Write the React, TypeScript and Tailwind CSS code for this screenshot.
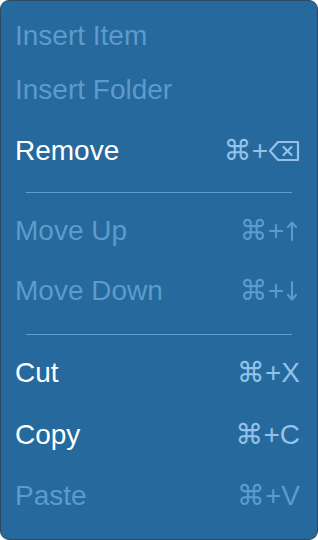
import React from 'react';

type Item = {
  label: string;
  keyName?: React.ReactNode;
  enabled: boolean;
  h: string;
};

const DeleteKey = () => (
  <svg width="32" height="22" viewBox="0 0 32 22" fill="none" stroke="currentColor" strokeWidth="2.2" strokeLinejoin="round" strokeLinecap="round">
    <path d="M2 11 L10 2 H30 V20 H10 Z" />
    <path d="M15.5 7 L23.5 15 M23.5 7 L15.5 15" />
  </svg>
);

const UpArrow = () => (
  <svg width="16" height="22" viewBox="0 0 16 22" fill="none" stroke="currentColor" strokeWidth="2" strokeLinecap="round" strokeLinejoin="round">
    <path d="M8 3 V20 M4 7 L8 2.5 L12 7" />
  </svg>
);

const DownArrow = () => (
  <svg width="16" height="22" viewBox="0 0 16 22" fill="none" stroke="currentColor" strokeWidth="2" strokeLinecap="round" strokeLinejoin="round">
    <path d="M8 2 V19 M4 15 L8 19.5 L12 15" />
  </svg>
);

const Row: React.FC<{ item: Item }> = ({ item }) => (
  <div className={`flex items-center justify-between pl-[14px] pr-[17px] ${item.h}`}>
    <span className={item.enabled ? 'text-white' : 'text-[#5c9bcc]'}>{item.label}</span>
    {item.keyName && (
      <span className={`flex items-center ${item.enabled ? 'text-[#92c2e8]' : 'text-[#5c9bcc]'}`}>
        ⌘+{item.keyName}
      </span>
    )}
  </div>
);

const Separator: React.FC<{ className: string }> = ({ className }) => (
  <div className={className}>
    <div className="mx-[25px] h-px bg-[#5f9ecf]" />
  </div>
);

export default function App() {
  return (
    <div className="w-[318px] h-[540px] bg-white">
      <div
        className="w-full h-full flex flex-col pt-2 bg-[#25699d] border border-[#2a4a66] rounded-[9px] text-[28px] leading-none"
        style={{ fontFamily: '"Liberation Sans", "DejaVu Sans", sans-serif' }}
      >
        <Row item={{ label: 'Insert Item', enabled: false, h: 'h-[54px]' }} />
        <Row item={{ label: 'Insert Folder', enabled: false, h: 'h-[54px]' }} />
        <Row item={{ label: 'Remove', keyName: <DeleteKey />, enabled: true, h: 'h-[68px]' }} />
        <Separator className="pt-[7px] pb-[6px]" />
        <Row item={{ label: 'Move Up', keyName: <UpArrow />, enabled: false, h: 'h-[64px]' }} />
        <Row item={{ label: 'Move Down', keyName: <DownArrow />, enabled: false, h: 'h-[56px]' }} />
        <Separator className="pt-[15px] pb-[6px]" />
        <Row item={{ label: 'Cut', keyName: 'X', enabled: true, h: 'h-[63px]' }} />
        <Row item={{ label: 'Copy', keyName: 'C', enabled: true, h: 'h-[62px]' }} />
        <Row item={{ label: 'Paste', keyName: 'V', enabled: false, h: 'h-[60px]' }} />
      </div>
    </div>
  );
}
